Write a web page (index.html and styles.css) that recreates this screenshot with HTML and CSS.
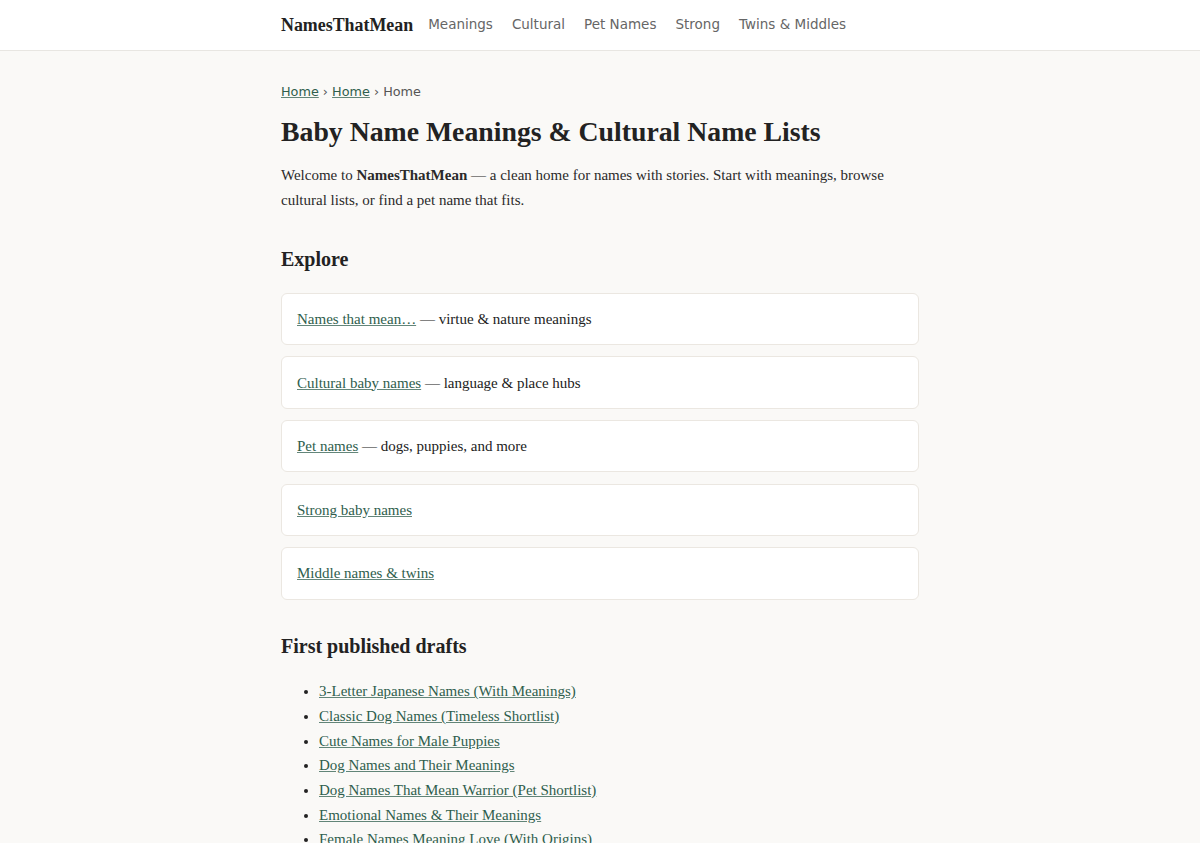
FILE: index.html
```html
<!DOCTYPE html>
<html lang="en">
<head>
<meta charset="utf-8">
<title>NamesThatMean</title>
<link rel="stylesheet" href="styles.css">
</head>
<body>
<header class="site-header">
  <div class="wrap header-inner">
    <a class="brand" href="#">NamesThatMean</a>
    <nav class="nav">
      <a href="#">Meanings</a>
      <a href="#">Cultural</a>
      <a href="#">Pet Names</a>
      <a href="#">Strong</a>
      <a href="#">Twins &amp; Middles</a>
    </nav>
  </div>
</header>
<main class="wrap main">
  <div class="crumbs"><a href="#">Home</a> › <a href="#">Home</a> › <span>Home</span></div>
  <h1>Baby Name Meanings &amp; Cultural Name Lists</h1>
  <p class="intro">Welcome to <strong>NamesThatMean</strong> — a clean home for names with stories. Start with meanings, browse cultural lists, or find a pet name that fits.</p>
  <h2>Explore</h2>
  <div class="cards">
    <div class="card"><a href="#">Names that mean…</a> — virtue &amp; nature meanings</div>
    <div class="card"><a href="#">Cultural baby names</a> — language &amp; place hubs</div>
    <div class="card"><a href="#">Pet names</a> — dogs, puppies, and more</div>
    <div class="card"><a href="#">Strong baby names</a></div>
    <div class="card"><a href="#">Middle names &amp; twins</a></div>
  </div>
  <h2 class="drafts-title">First published drafts</h2>
  <ul class="drafts">
    <li><a href="#">3-Letter Japanese Names (With Meanings)</a></li>
    <li><a href="#">Classic Dog Names (Timeless Shortlist)</a></li>
    <li><a href="#">Cute Names for Male Puppies</a></li>
    <li><a href="#">Dog Names and Their Meanings</a></li>
    <li><a href="#">Dog Names That Mean Warrior (Pet Shortlist)</a></li>
    <li><a href="#">Emotional Names &amp; Their Meanings</a></li>
    <li><a href="#">Female Names Meaning Love (With Origins)</a></li>
    <li><a href="#">Gender Neutral Names (With Meanings)</a></li>
  </ul>
</main>
</body>
</html>
```

FILE: styles.css
```css
* { box-sizing: border-box; }
html, body { margin: 0; padding: 0; }
body {
  background: #faf9f7;
  color: #222;
  font-family: "Liberation Serif", "Times New Roman", serif;
  font-size: 15px;
  line-height: 1.6;
}
a {
  color: #2f5e4d;
  text-decoration-color: rgba(47, 94, 77, 0.75);
}
.wrap {
  width: 638px;
  margin: 0 auto;
}
.site-header {
  background: #fff;
  border-bottom: 1px solid #e8e6e2;
}
.header-inner {
  height: 50px;
  display: flex;
  align-items: center;
  gap: 15px;
}
.brand {
  font-family: "Liberation Serif", serif;
  font-weight: bold;
  font-size: 17.9px;
  color: #222;
  text-decoration: none;
}
.nav {
  display: flex;
  gap: 19px;
  font-family: "DejaVu Sans", sans-serif;
  font-size: 13.5px;
}
.nav a {
  color: #666;
  text-decoration: none;
}
.main { padding-top: 31px; padding-bottom: 40px; }
.crumbs {
  font-family: "DejaVu Sans", sans-serif;
  font-size: 12.8px;
  line-height: 20px;
  color: #555;
}
h1 {
  font-size: 27.75px;
  line-height: 1.2;
  margin: 13px 0 15px;
}
.intro { margin: 0; line-height: 25px; color: #2a2a2a; }
h2 {
  font-size: 20px;
  line-height: 26px;
  margin: 32.5px 0 21px;
}
.cards {
  display: flex;
  flex-direction: column;
  gap: 11.25px;
}
.card {
  background: #fff;
  border: 1px solid #ebe7e1;
  border-radius: 6px;
  padding: 13.2px 15px;
  line-height: 24px;
}
.drafts-title { margin-top: 33px; margin-bottom: 20.7px; }
.drafts {
  margin: 0;
  padding-left: 38px;
  line-height: 24.67px;
}
```
